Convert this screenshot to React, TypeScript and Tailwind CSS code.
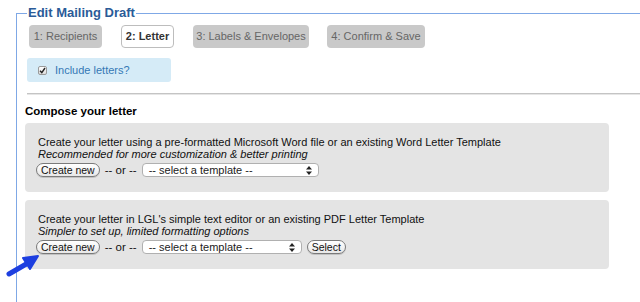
import React from "react";

const font = { fontFamily: '"Liberation Sans", Arial, sans-serif' };

function Pill({ children }: { children: React.ReactNode }) {
  return (
    <span className="inline-flex items-center h-[14px] px-[4px] rounded-full border border-[#7a7a7a] bg-gradient-to-b from-white to-[#e8e8e8] text-[10.5px] text-[#111] leading-none shadow-[0_1px_0_rgba(0,0,0,0.15)] whitespace-nowrap">
      {children}
    </span>
  );
}

function Select({ width }: { width: string }) {
  return (
    <span
      className={`inline-flex items-center justify-between h-[14px] pl-[6px] pr-[6px] rounded-[4px] border border-[#b0b0b0] bg-white text-[11px] text-[#222] leading-none ${width}`}
    >
      <span>-- select a template --</span>
      <svg width="6" height="9" viewBox="0 0 6 9">
        <path d="M3 0 L6 3.5 H0 Z" fill="#222" />
        <path d="M3 9 L6 5.5 H0 Z" fill="#222" />
      </svg>
    </span>
  );
}

export default function App() {
  return (
    <div className="w-[640px] h-[302px] bg-white overflow-hidden relative" style={font}>
      <fieldset className="ml-[16px] mt-[6px] w-[640px] h-[400px] border-l border-t border-[#7fa8e6] pl-[9px]">
        <legend className="ml-[1px] px-[1px] text-[13px] font-bold text-[#2a5b98] leading-[14px]">
          Edit Mailing Draft
        </legend>
        <div className="flex gap-[19px] mt-[5px] ml-[3px] text-[11px] whitespace-nowrap">
          <span className="h-[23px] w-[73px] flex items-center justify-center rounded-[4px] bg-[#c9c9c9] text-[#666]">1: Recipients</span>
          <span className="h-[23px] w-[53px] flex items-center justify-center rounded-[4px] bg-white border border-[#bdbdbd] font-bold text-[#333]">2: Letter</span>
          <span className="h-[23px] w-[116px] flex items-center justify-center rounded-[4px] bg-[#c9c9c9] text-[#666]">3: Labels &amp; Envelopes</span>
          <span className="h-[23px] w-[98px] -ml-[1px] flex items-center justify-center rounded-[4px] bg-[#c9c9c9] text-[#666]">4: Confirm &amp; Save</span>
        </div>
        <div className="mt-[10px] ml-[1px] w-[144px] h-[24px] rounded-[3px] bg-[#d5ebf7] flex items-center pl-[11px] gap-[8px] text-[11px] text-[#3478b5]">
          <span className="w-[9px] h-[9px] rounded-[2px] border border-[#9a9a9a] bg-gradient-to-b from-white to-[#ddd] flex items-center justify-center">
            <svg width="7" height="7" viewBox="0 0 7 7"><path d="M1 3.8 L2.8 5.6 L6 1" stroke="#222" strokeWidth="1.4" fill="none" /></svg>
          </span>
          <span>Include letters?</span>
        </div>
        <div className="mt-[11px] ml-[1px] h-[2px] bg-[#c4c4c4] border-b border-[#e6e6e6]" />
        <div className="mt-[9px] -ml-[1px] text-[11.5px] font-bold text-black leading-[14px]">Compose your letter</div>
        <div className="mt-[5px] -ml-[1px] w-[584px] h-[69px] rounded-[4px] bg-[#e4e4e4] pl-[13px] pt-[13px] text-[11px] text-[#111] leading-[12px]">
          <div>Create your letter using a pre-formatted Microsoft Word file or an existing Word Letter Template</div>
          <div className="italic">Recommended for more customization &amp; better printing</div>
          <div className="mt-[3px] -ml-[2px] flex items-center gap-[5px] text-[11.5px]">
            <Pill>Create new</Pill>
            <span>-- or --</span>
            <Select width="w-[177px]" />
          </div>
        </div>
        <div className="mt-[8px] -ml-[1px] w-[584px] h-[69px] rounded-[4px] bg-[#e4e4e4] pl-[13px] pt-[13px] text-[11px] text-[#111] leading-[12px]">
          <div>Create your letter in LGL's simple text editor or an existing PDF Letter Template</div>
          <div className="italic">Simpler to set up, limited formatting options</div>
          <div className="mt-[3px] -ml-[2px] flex items-center gap-[5px] text-[11.5px]">
            <Pill>Create new</Pill>
            <span>-- or --</span>
            <Select width="w-[160px]" />
            <Pill>Select</Pill>
          </div>
        </div>
      </fieldset>
      <svg className="absolute left-[4px] top-[250px]" width="40" height="30" viewBox="0 0 40 30">
        <path d="M5 24 L24 13" stroke="#1d3fe0" strokeWidth="5" strokeLinecap="round" />
        <path d="M34 6 L19 8 L26 19 Z" fill="#1d3fe0" stroke="#1d3fe0" strokeWidth="2" strokeLinejoin="round" />
      </svg>
    </div>
  );
}
